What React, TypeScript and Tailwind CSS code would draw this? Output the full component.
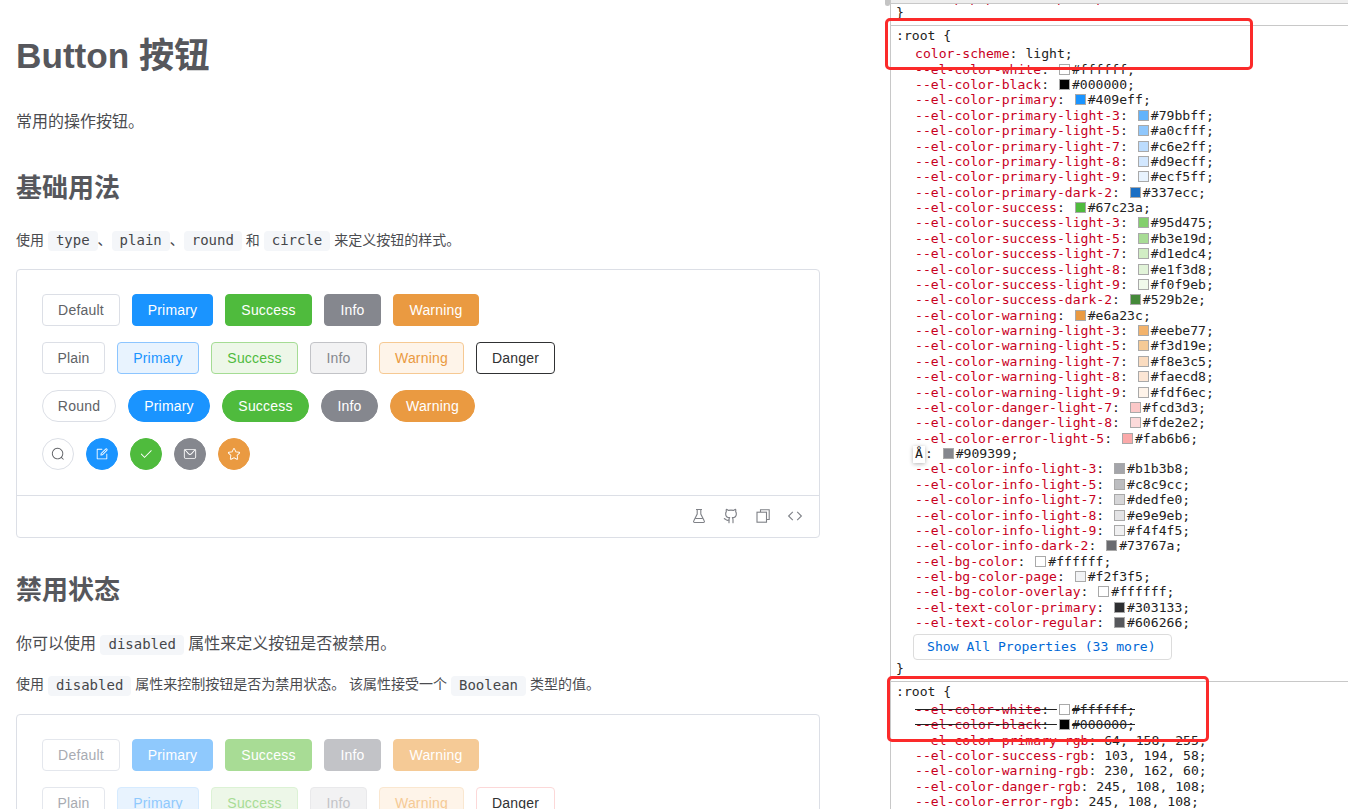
import React from 'react';

const P = {
  search: ['m795.904 750.72 124.992 124.928a32 32 0 0 1-45.248 45.248L750.656 795.904a416 416 0 1 1 45.248-45.248zM480 832a352 352 0 1 0 0-704 352 352 0 0 0 0 704'],
  edit: ['M832 512a32 32 0 1 1 64 0v352a32 32 0 0 1-32 32H160a32 32 0 0 1-32-32V160a32 32 0 0 1 32-32h352a32 32 0 0 1 0 64H192v640h640z', 'm469.952 554.24 52.8-7.552L847.104 222.4a32 32 0 1 0-45.248-45.248L477.44 501.44l-7.552 52.8zm422.4-422.4a96 96 0 0 1 0 135.808l-331.84 331.84a32 32 0 0 1-18.112 9.088L436.8 623.68a32 32 0 0 1-36.224-36.224l15.104-105.6a32 32 0 0 1 9.024-18.112l331.904-331.84a96 96 0 0 1 135.744 0z'],
  check: ['M406.656 706.944 195.84 496.256a32 32 0 1 0-45.248 45.248l256 256 512-512a32 32 0 0 0-45.248-45.248L406.592 706.944z'],
  message: ['M128 224v512a64 64 0 0 0 64 64h640a64 64 0 0 0 64-64V224zm0-64h768a64 64 0 0 1 64 64v512a128 128 0 0 1-128 128H192A128 128 0 0 1 64 736V224a64 64 0 0 1 64-64', 'M904 224 656.512 506.88a192 192 0 0 1-289.024 0L120 224zm-698.944 0 210.56 240.704a128 128 0 0 0 192.704 0L818.944 224H205.056'],
  star: ['m512 747.84 228.16 119.936a6.4 6.4 0 0 0 9.28-6.72l-43.52-254.08 184.512-179.904a6.4 6.4 0 0 0-3.52-10.88l-255.104-37.12L517.76 147.904a6.4 6.4 0 0 0-11.52 0L392.192 379.072l-255.104 37.12a6.4 6.4 0 0 0-3.52 10.88L318.08 606.976l-43.584 254.08a6.4 6.4 0 0 0 9.28 6.72zM313.6 924.48a70.4 70.4 0 0 1-102.144-74.24l37.888-220.928L88.96 472.96A70.4 70.4 0 0 1 128 352.896l221.76-32.256 99.2-200.96a70.4 70.4 0 0 1 126.208 0l99.2 200.96 221.824 32.256a70.4 70.4 0 0 1 39.04 120.064L774.72 629.376l37.888 220.928a70.4 70.4 0 0 1-102.144 74.24L512 820.096l-198.4 104.32z'],
};

function EpIcon({ name }: { name: keyof typeof P }) {
  return (
    <svg viewBox="0 0 1024 1024" className="w-[14px] h-[14px]" fill="currentColor">
      {P[name].map((d) => (
        <path key={d} d={d} />
      ))}
    </svg>
  );
}

const S = {
  def: 'bg-white border-[#dcdfe6] text-[#606266]',
  primary: 'bg-[#1a94ff] border-[#1a94ff] text-white',
  success: 'bg-[#4fbb3d] border-[#4fbb3d] text-white',
  info: 'bg-[#85878e] border-[#85878e] text-white',
  warning: 'bg-[#ea9a41] border-[#ea9a41] text-white',
  pPrimary: 'bg-[#e8f3fe] border-[#8cc5ff] text-[#1a94ff]',
  pSuccess: 'bg-[#edf7e8] border-[#a5dc94] text-[#4fbb3d]',
  pInfo: 'bg-[#f2f2f3] border-[#c2c3c7] text-[#85878e]',
  pWarning: 'bg-[#fef4e9] border-[#f6c993] text-[#ea9a41]',
  danger: 'bg-white border-[#303133] text-[#303133]',
  dDef: 'bg-white border-[#e4e7ed] text-[#a8abb2]',
  dPrimary: 'bg-[#8fc9fd] border-[#8fc9fd] text-white',
  dSuccess: 'bg-[#a8dc95] border-[#a8dc95] text-white',
  dInfo: 'bg-[#c2c3c7] border-[#c2c3c7] text-white',
  dWarning: 'bg-[#f5ca96] border-[#f5ca96] text-white',
  dpPrimary: 'bg-[#e8f3fe] border-[#d6ebff] text-[#8fc9fd]',
  dpSuccess: 'bg-[#edf7e8] border-[#dcf2d5] text-[#a8dc95]',
  dpInfo: 'bg-[#f2f2f3] border-[#e9e9eb] text-[#c2c3c7]',
  dpWarning: 'bg-[#fef4e9] border-[#fae7d0] text-[#f5ca96]',
  dDanger: 'bg-white border-[#fcd8d8] text-[#303133]',
};

function Btn({ s, w, children, round }: { s: string; w: string; children: React.ReactNode; round?: boolean }) {
  return (
    <button className={`inline-flex items-center justify-center h-8 border text-sm tracking-[0.2px] ${w} ${round ? 'rounded-full' : 'rounded-[4px]'} ${s}`}>
      {children}
    </button>
  );
}

function Circle({ s, name }: { s: string; name: keyof typeof P }) {
  return (
    <button className={`inline-flex items-center justify-center w-8 h-8 border rounded-full ${s}`}>
      <EpIcon name={name} />
    </button>
  );
}

function Code({ children }: { children: React.ReactNode }) {
  return (
    <code className="inline-block px-2 h-5 leading-[18px] rounded-[4px] bg-[#f4f6f9] text-[#454649] text-sm font-['DejaVu_Sans_Mono',monospace] align-middle">
      {children}
    </code>
  );
}

function H2({ children, cls }: { children: React.ReactNode; cls: string }) {
  return <h2 className={`text-[26px] leading-[34px] font-bold text-[#56575c] ${cls}`}>{children}</h2>;
}

function Row1({ d }: { d?: boolean }) {
  return (
    <div className="flex gap-3">
      <Btn w="w-[78px]" s={d ? S.dDef : S.def}>Default</Btn>
      <Btn w="w-[81px]" s={d ? S.dPrimary : S.primary}>Primary</Btn>
      <Btn w="w-[87px]" s={d ? S.dSuccess : S.success}>Success</Btn>
      <Btn w="w-[57px]" s={d ? S.dInfo : S.info}>Info</Btn>
      <Btn w="w-[86px]" s={d ? S.dWarning : S.warning}>Warning</Btn>
    </div>
  );
}

function Row2({ d }: { d?: boolean }) {
  return (
    <div className="flex gap-3">
      <Btn w="w-[63px]" s={d ? S.dDef : S.def}>Plain</Btn>
      <Btn w="w-[82px]" s={d ? S.dpPrimary : S.pPrimary}>Primary</Btn>
      <Btn w="w-[87px]" s={d ? S.dpSuccess : S.pSuccess}>Success</Btn>
      <Btn w="w-[57px]" s={d ? S.dpInfo : S.pInfo}>Info</Btn>
      <Btn w="w-[85px]" s={d ? S.dpWarning : S.pWarning}>Warning</Btn>
      <Btn w="w-[79px]" s={d ? S.dDanger : S.danger}>Danger</Btn>
    </div>
  );
}

const rows1: [string, string, string?][] = [
  ['--el-color-white', '#ffffff'],
  ['--el-color-black', '#000000'],
  ['--el-color-primary', '#409eff', '#1a94ff'],
  ['--el-color-primary-light-3', '#79bbff', '#62b3fb'],
  ['--el-color-primary-light-5', '#a0cfff', '#8fc7fc'],
  ['--el-color-primary-light-7', '#c6e2ff', '#bcdcfd'],
  ['--el-color-primary-light-8', '#d9ecff', '#d2e7fe'],
  ['--el-color-primary-light-9', '#ecf5ff', '#e8f3fe'],
  ['--el-color-primary-dark-2', '#337ecc', '#1a6fc4'],
  ['--el-color-success', '#67c23a', '#4fbb3d'],
  ['--el-color-success-light-3', '#95d475', '#84cf6e'],
  ['--el-color-success-light-5', '#b3e19d', '#a8dc95'],
  ['--el-color-success-light-7', '#d1edc4'],
  ['--el-color-success-light-8', '#e1f3d8'],
  ['--el-color-success-light-9', '#f0f9eb'],
  ['--el-color-success-dark-2', '#529b2e', '#45893a'],
  ['--el-color-warning', '#e6a23c', '#ea9a41'],
  ['--el-color-warning-light-3', '#eebe77', '#f2b36c'],
  ['--el-color-warning-light-5', '#f3d19e', '#f5ca96'],
  ['--el-color-warning-light-7', '#f8e3c5', '#fadcc0'],
  ['--el-color-warning-light-8', '#faecd8', '#fce6d5'],
  ['--el-color-warning-light-9', '#fdf6ec', '#fef3e9'],
  ['--el-color-danger-light-7', '#fcd3d3', '#fbc8c8'],
  ['--el-color-danger-light-8', '#fde2e2', '#fcdada'],
  ['--el-color-error-light-5', '#fab6b6', '#fba9a9'],
];

const rows2: [string, string, string?][] = [
  ['--el-color-info-light-3', '#b1b3b8', '#a4a5aa'],
  ['--el-color-info-light-5', '#c8c9cc', '#bcbdc0'],
  ['--el-color-info-light-7', '#dedfe0', '#d6d6d8'],
  ['--el-color-info-light-8', '#e9e9eb', '#e3e3e5'],
  ['--el-color-info-light-9', '#f4f4f5', '#f0f0f1'],
  ['--el-color-info-dark-2', '#73767a', '#6a6b6f'],
  ['--el-bg-color', '#ffffff'],
  ['--el-bg-color-page', '#f2f3f5'],
  ['--el-bg-color-overlay', '#ffffff'],
  ['--el-text-color-primary', '#303133', '#2e2f31'],
  ['--el-text-color-regular', '#606266', '#57585c'],
];

function Swatch({ color }: { color: string }) {
  return (
    <span className="inline-block w-[11px] h-[11px] ml-[2px] mr-[2px] border border-[#a9a9a9] align-[-1px]" style={{ backgroundColor: color }} />
  );
}

function Row({ n, v, c, strike }: { n: string; v: string; c?: string; strike?: boolean }) {
  return (
    <div className={`pl-[24px] h-[15.39px] leading-[15.39px] whitespace-pre ${strike ? 'line-through decoration-[#222222]' : ''}`}>
      <span className="text-[#c8001e]">{n}</span>
      <span>{': '}</span>
      <Swatch color={c ?? v} />
      <span>{v};</span>
    </div>
  );
}

function Plain({ n, v }: { n: string; v: string }) {
  return (
    <div className="pl-[24px] h-[15.39px] leading-[15.39px] whitespace-pre">
      <span className="text-[#c8001e]">{n}</span>
      <span>{': ' + v + ';'}</span>
    </div>
  );
}

function Inspector() {
  return (
    <div className="relative w-[458px] h-[809px] overflow-hidden border-l border-[#c8c8c8] bg-white text-[13.1px] text-[#222222] font-['DejaVu_Sans_Mono',monospace]">
      <div className="h-[4px] bg-[#eeeeee] border-b border-[#c8c8c8]" />
      <div className="h-[1px] overflow-hidden">
        <div className="-mt-[14px] pl-[24px] leading-[15.39px] whitespace-pre text-[#c8001e]">{'     p p p        p    p'}</div>
      </div>
      <div className="pl-[5px] leading-[15.39px]">{'}'}</div>
      <div className="mt-[5px] border-t border-[#c8c8c8]" />
      <div className="pl-[5px] pt-[2px] mb-[2.5px] leading-[15.39px]">{':root {'}</div>
      <Plain n="color-scheme" v="light" />
      {rows1.map(([n, v, c]) => (
        <Row key={n} n={n} v={v} c={c} />
      ))}
      <div className="pl-[22px] h-[15.39px] leading-[15.39px] whitespace-pre">
        <span className="inline-block px-[2px] h-[17px] bg-white shadow-[0_1px_4px_rgba(0,0,0,0.3)]">Å</span>
        <span>{': '}</span>
        <Swatch color="#85878e" />
        <span>#909399;</span>
      </div>
      {rows2.map(([n, v, c]) => (
        <Row key={n} n={n} v={v} c={c} />
      ))}
      <div className="ml-[22px] mt-[3px] w-[259px] h-[26px] flex items-center pl-[13px] border border-[#dcdcdc] rounded-[4px] text-[#0068d6]">
        Show All Properties (33 more)
      </div>
      <div className="pl-[5px] mt-[1px] leading-[15.39px]">{'}'}</div>
      <div className="mt-[5px] border-t border-[#c8c8c8]" />
      <div className="pl-[5px] pt-[2px] mb-[2.5px] leading-[15.39px]">{':root {'}</div>
      <Row n="--el-color-white" v="#ffffff" strike />
      <Row n="--el-color-black" v="#000000" strike />
      <Plain n="--el-color-primary-rgb" v="64, 158, 255" />
      <Plain n="--el-color-success-rgb" v="103, 194, 58" />
      <Plain n="--el-color-warning-rgb" v="230, 162, 60" />
      <Plain n="--el-color-danger-rgb" v="245, 108, 108" />
      <Plain n="--el-color-error-rgb" v="245, 108, 108" />
    </div>
  );
}

export default function App() {
  return (
    <div className="relative flex w-[1348px] h-[809px] overflow-hidden bg-white">
      <div className="w-[890px] shrink-0 pl-4 pr-[70px] font-['Liberation_Sans','Noto_Sans_CJK_SC',sans-serif] text-[#4b4c50]">
        <h1 className="mt-[36px] text-[35.2px] leading-[40px] font-bold text-[#56575c]">Button 按钮</h1>
        <p className="mt-[34px] text-base leading-6">常用的操作按钮。</p>
        <H2 cls="mt-[37px]">基础用法</H2>
        <p className="mt-[24px] text-sm leading-[22px]">
          使用 <Code>type</Code>、<Code>plain</Code>、<Code>round</Code> 和 <Code>circle</Code> 来定义按钮的样式。
        </p>
        <div className="mt-[18px] border border-[#dcdfe6] rounded-[4px]">
          <div className="flex flex-col gap-4 pt-6 pb-[25px] pl-[25px]">
            <Row1 />
            <Row2 />
            <div className="flex gap-3">
              <Btn round w="w-[74px]" s={S.def}>Round</Btn>
              <Btn round w="w-[82px]" s={S.primary}>Primary</Btn>
              <Btn round w="w-[87px]" s={S.success}>Success</Btn>
              <Btn round w="w-[57px]" s={S.info}>Info</Btn>
              <Btn round w="w-[85px]" s={S.warning}>Warning</Btn>
            </div>
            <div className="flex gap-3">
              <Circle s={S.def} name="search" />
              <Circle s={S.primary} name="edit" />
              <Circle s={S.success} name="check" />
              <Circle s={S.info} name="message" />
              <Circle s={S.warning} name="star" />
            </div>
          </div>
          <div className="flex items-center justify-end gap-4 h-[42px] pr-4 pb-[2px] border-t border-[#dcdfe6] text-[#7f8187]">
            <svg viewBox="0 0 16 16" className="w-4 h-4" fill="none" stroke="currentColor" strokeWidth="1.1">
              <path d="M5 1.5h6M6.2 1.5v4.6L2.7 13a1 1 0 0 0 .9 1.5h8.8a1 1 0 0 0 .9-1.5L9.8 6.100V1.500M4.600 10.500h6.800" />
            </svg>
            <svg viewBox="0 0 24 24" className="w-4 h-4" fill="none" stroke="currentColor" strokeWidth="1.700" strokeLinecap="round" strokeLinejoin="round">
              <path d="M15 22v-4a4.800 4.800 0 0 0-1-3.500c3 0 6-2 6-5.500.080-1.250-.270-2.480-1-3.500.280-1.150.280-2.350 0-3.500 0 0-1 0-3 1.500-2.640-.500-5.360-.500-8 0C6 2 5 2 5 2c-.300 1.150-.300 2.350 0 3.500A5.403 5.403 0 0 0 4 9c0 3.500 3 5.500 6 5.500-.390.490-.680 1.050-.850 1.650-.170.600-.220 1.230-.150 1.850v4" />
              <path d="M9 18c-4.510 2-5-2-7-2" />
            </svg>
            <svg viewBox="0 0 16 16" className="w-4 h-4" fill="none" stroke="currentColor" strokeWidth="1.100">
              <path d="M5.500 4V1.800h8.700v9.700H11.500" />
              <rect x="2" y="4.200" width="9.500" height="10" />
            </svg>
            <svg viewBox="0 0 16 16" className="w-4 h-4" fill="none" stroke="currentColor" strokeWidth="1.100">
              <path d="M5.800 3.800 1.600 8l4.200 4.200M10.200 3.800 14.400 8l-4.200 4.200" />
            </svg>
          </div>
        </div>
        <H2 cls="mt-[35px]">禁用状态</H2>
        <p className="mt-[25px] text-base leading-6">
          你可以使用 <Code>disabled</Code> 属性来定义按钮是否被禁用。
        </p>
        <p className="mt-[17px] text-sm leading-[22px]">
          使用 <Code>disabled</Code> 属性来控制按钮是否为禁用状态。 该属性接受一个 <Code>Boolean</Code> 类型的值。
        </p>
        <div className="mt-[18px] border border-[#dcdfe6] rounded-[4px]">
          <div className="flex flex-col gap-4 pt-6 pb-6 pl-[25px]">
            <Row1 d />
            <Row2 d />
          </div>
        </div>
      </div>
      <Inspector />
      <div className="absolute left-[885px] top-0 w-[5px] h-[6px] rounded-b-full bg-[#c4c4c4]" />
      <div className="absolute left-[885px] top-[18px] w-[368px] h-[52px] border-[3px] border-[#fb2a2a] rounded-[5px]" />
      <div className="absolute left-[887px] top-[676px] w-[322px] h-[66px] border-[3px] border-[#fb2a2a] rounded-[5px]" />
    </div>
  );
}
